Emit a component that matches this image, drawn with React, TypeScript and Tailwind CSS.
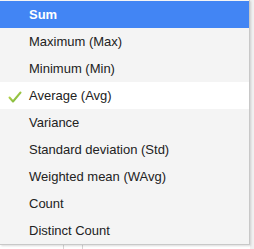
import React from 'react';

const items = [
  'Sum',
  'Maximum (Max)',
  'Minimum (Min)',
  'Average (Avg)',
  'Variance',
  'Standard deviation (Std)',
  'Weighted mean (WAvg)',
  'Count',
  'Distinct Count',
];

const Check = () => (
  <svg width="14" height="12" viewBox="0 0 14 12" className="absolute left-[8px] top-[9px]">
    <defs>
      <linearGradient id="chk" x1="0" y1="0" x2="1" y2="1">
        <stop offset="0" stopColor="#c8d94a" />
        <stop offset="1" stopColor="#6cb13c" />
      </linearGradient>
    </defs>
    <path d="M1.5 6.5 L5 10.5 L12.5 1.5" fill="none" stroke="url(#chk)" strokeWidth="2" strokeLinecap="round" strokeLinejoin="round" />
  </svg>
);

export default function App() {
  return (
    <div className="w-[254px] h-[249px] bg-white relative overflow-hidden font-['Liberation_Sans',Arial,sans-serif]">
      {/* background behind the menu */}
      <div className="absolute right-0 top-0 w-[4px] h-full bg-[#f1f1f1]" />
      <div className="absolute left-[63px] bottom-0 w-px h-[4px] bg-[#d6d6d6]" />
      <div className="absolute left-[82px] bottom-0 w-px h-[4px] bg-[#d6d6d6]" />

      <div className="relative w-[250px] pt-px bg-[#f4f4f4] border-r border-b border-[#c8c8c8] shadow-[1px_1px_2px_rgba(0,0,0,0.15)]">
        {items.map((label, i) => {
          const selected = i === 0;
          const checked = i === 3;
          return (
            <div
              key={label}
              className={`relative h-[27px] flex items-center pl-[29px] text-[13px] ${
                selected
                  ? 'bg-[#4285f4] text-white font-bold'
                  : checked
                  ? 'bg-white text-[#222]'
                  : 'text-[#222]'
              }`}
            >
              {checked && <Check />}
              {label}
            </div>
          );
        })}
      </div>
    </div>
  );
}
